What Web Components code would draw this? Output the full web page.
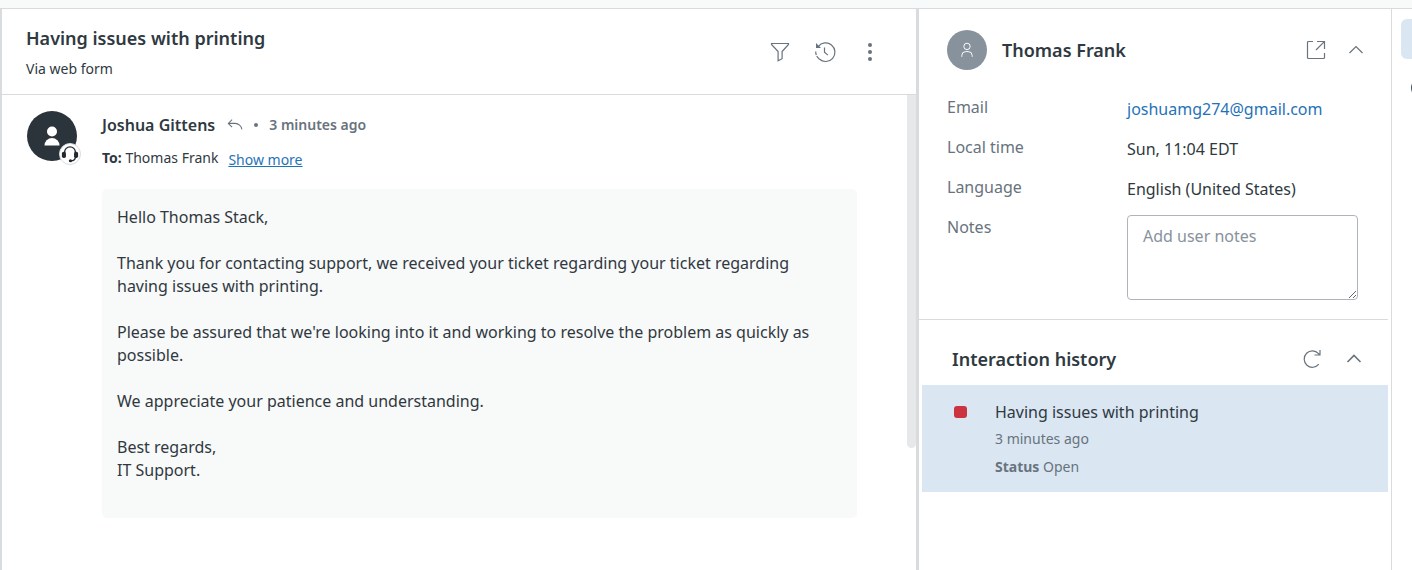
<!DOCTYPE html>
<html lang="en">
<head>
<meta charset="utf-8">
<meta name="viewport" content="width=device-width, initial-scale=1">
<title>Having issues with printing</title>
<style>
  :root {
    --ink: #2f3941;
    --muted: #68737d;
    --line: #d8dcde;
    --link: #1f73b7;
    --select: #dae6f2;
    --soft: #f8f9f9;
  }
  body {
    margin: 0;
    background: #fff;
    color: var(--ink);
    font: 16px/24px "Noto Sans", "Open Sans", sans-serif;
  }
</style>
</head>
<body>
<ticket-workspace>
  <ticket-conversation slot="main">
    <ticket-header slot="header" heading="Having issues with printing" channel="Via web form"></ticket-header>
    <ticket-message author="Joshua Gittens" when="3 minutes ago" recipient="Thomas Frank">
      <p>Hello Thomas Stack,</p>
      <p>Thank you for contacting support, we received your ticket regarding your ticket regarding having issues with printing.</p>
      <p>Please be assured that we're looking into it and working to resolve the problem as quickly as possible.</p>
      <p>We appreciate your patience and understanding.</p>
      <p>Best regards,<br>IT Support.</p>
    </ticket-message>
  </ticket-conversation>
  <customer-card slot="side" name="Thomas Frank" email="joshuamg274@gmail.com" time="Sun, 11:04 EDT" language="English (United States)"></customer-card>
  <interaction-history slot="side">
    <history-item when="3 minutes ago" status="Open">Having issues with printing</history-item>
  </interaction-history>
  <app-rail slot="rail"></app-rail>
</ticket-workspace>

<script>
const ICONS = {
  filter: '<path d="M1.500 1.500h17v1l-6.400 7v7.200l-4 2V9.500l-6.600-7z"/>',
  clock: '<path d="M3.200 4.600A9.300 9.300 0 1 1 4.300 17"/><path d="M4.300 17A9.300 9.300 0 0 1 .7 9.500" stroke-dasharray="4 1"/><path d="M1 1v5h5z" fill="currentColor" stroke="none"/><path d="M9.500 5.500v4.800l3.400 2.800"/>',
  dots: '<g fill="currentColor" stroke="none"><circle cx="10" cy="3" r="2"/><circle cx="10" cy="10" r="2"/><circle cx="10" cy="17" r="2"/></g>',
  open: '<path d="M7 1.500H2.500a1 1 0 0 0-1 1v15a1 1 0 0 0 1 1h15a1 1 0 0 0 1-1V13M11 1.500h7.500V9M18.300 1.700L10 10"/>',
  up: '<path d="M3.500 13L10 6.500l6.500 6.500"/>',
  refresh: '<path d="M16.800 15.200A8.200 8.200 0 1 1 16.500 4.600L17.800 6M18 1v5h-5.500"/>',
  reply: '<path d="M6 3L1.500 7.500 6 12M1.500 7.500h8a8 8 0 0 1 8 7"/>',
  person: '<circle cx="10" cy="5.500" r="4"/><path d="M3.500 18.500v-1.500a5 5 0 0 1 5-5h3a5 5 0 0 1 5 5v1.500"/>',
  user: '<g fill="currentColor" stroke="none"><circle cx="10" cy="5.500" r="5"/><path d="M2.500 19.500a7.500 7.500 0 0 1 15 0z"/></g>',
  headset: '<path d="M4 12V8a6 6 0 0 1 12 0V13c0 3-2 4.500-5 4.500" stroke-width="1.500"/><g fill="currentColor" stroke="none"><rect x="1" y="7.500" width="4.500" height="7" rx="2"/><rect x="14.500" y="7.500" width="4.500" height="7" rx="2"/><circle cx="10.500" cy="17.500" r="1.800"/></g>'
};

const define = (tag, render) => customElements.define(tag, class extends HTMLElement {
  connectedCallback() {
    if (this.shadowRoot) return;
    this.attachShadow({ mode: 'open' }).innerHTML =
      '<style>*{box-sizing:border-box}h1,h2,p,dl,dd,dt{margin:0}button{all:unset;box-sizing:border-box;display:grid;place-items:center;cursor:pointer}button:focus-visible{outline:2px solid #1f73b7}</style>' + render(name => this.getAttribute(name));
  }
});

define('ui-icon', at => `<style>
  :host { display: block; width: var(--size, 20px); height: var(--size, 20px); }
  svg { display: block; width: 100%; height: 100%; overflow: visible; }
</style>
<svg viewBox="0 0 20 20" fill="none" stroke="currentColor" stroke-width="${at('weight') || '1.2'}" aria-hidden="true">${ICONS[at('name')]}</svg>`);

define('ticket-workspace', () => `<style>
  :host { display: grid; grid-template-columns: minmax(0, 1fr) auto 21px; min-height: 100vh; box-sizing: border-box;
    border-top: 8px solid var(--soft); }
  main, aside, nav { border-top: 1px solid var(--line); }
  main { border-left: 2px solid var(--line); display: grid; }
  aside { width: 475px; border-left: 3px solid var(--line); }
  nav { border-left: 1px solid var(--line); overflow: hidden; }
</style>
<main><slot name="main"></slot></main>
<aside><slot name="side"></slot></aside>
<nav aria-label="Apps"><slot name="rail"></slot></nav>`);

define('ticket-conversation', () => `<style>
  :host { display: flex; flex-direction: column; }
  .log { flex: 1; display: grid; grid-template-columns: minmax(0, 1fr) 9px; }
  .thumb { background: #e6e8ea; height: 353px; border-radius: 0 0 5px 5px; }
</style>
<slot name="header"></slot>
<div class="log"><slot></slot><div class="thumb"></div></div>`);

define('ticket-header', at => `<style>
  :host { display: flex; justify-content: space-between; align-items: center; padding: 15px 36px 15px 24px; border-bottom: 1px solid var(--line); }
  h1 { font-size: 18px; line-height: 28px; font-weight: 600; }
  p { font-size: 14px; line-height: 20px; margin-top: 7px; }
  .tools { display: flex; gap: 25px; color: var(--muted); }
  button { width: 20px; height: 20px; }
</style>
<div><h1>${at('heading')}</h1><p>${at('channel')}</p></div>
<div class="tools">
  <button aria-label="Filter"><ui-icon name="filter"></ui-icon></button>
  <button aria-label="Events"><ui-icon name="clock"></ui-icon></button>
  <button aria-label="More actions"><ui-icon name="dots"></ui-icon></button>
</div>`);

define('ticket-message', at => `<style>
  :host { display: grid; grid-template-columns: 50px minmax(0, 1fr); column-gap: 25px; align-items: start; padding: 16px 50px 52px 25px; }
  .avatar { position: relative; display: grid; place-items: center; height: 50px; border-radius: 50%; background: #2b343b; color: #fff; --size: 20px; }
  .badge { position: absolute; right: -4px; bottom: -4px; width: 22px; height: 22px; border-radius: 50%; background: #fff; border: 1px solid var(--line); color: #222a30; display: grid; place-items: center; --size: 18px; }
  .by { display: flex; align-items: center; font-weight: 600; line-height: 28px; }
  .by ui-icon { margin: 0 10px 0 12px; --size: 17px; color: var(--muted); }
  .by .when { color: var(--muted); font-size: 14px; }
  .dot { width: 4px; height: 4px; border-radius: 50%; background: var(--muted); margin: 0 11px 0 0; }
  .to { display: flex; gap: 10px; font-size: 14px; line-height: 22px; margin: 8px 0 16px; }
  a { color: var(--link); line-height: 26px; }
  .bubble { background: var(--soft); border-radius: 5px; padding: 17px 15px 13px; line-height: 23px; color: #30383f; }
  ::slotted(p) { margin: 0 0 23px; }
</style>
<div class="avatar"><ui-icon name="user"></ui-icon><div class="badge"><ui-icon name="headset"></ui-icon></div></div>
<div>
  <div class="by"><span>${at('author')}</span><ui-icon name="reply"></ui-icon><i class="dot"></i><span class="when">${at('when')}</span></div>
  <div class="to"><span><b>To:</b> ${at('recipient')}</span><a href="#more">Show more</a></div>
  <div class="bubble"><slot></slot></div>
</div>`);

define('customer-card', at => `<style>
  :host { display: block; padding: 21px 30px 19px 28px; margin-right: 3px; border-bottom: 1px solid var(--line); }
  header { display: flex; align-items: center; gap: 15px; padding-bottom: 17px; margin-right: -8px; }
  .avatar { width: 40px; height: 40px; border-radius: 50%; background: #87929d; color: #fff; display: grid; place-items: center; --size: 16px; }
  h2 { flex: 1; font-size: 18px; line-height: 28px; font-weight: 600; }
  header button { width: 20px; height: 20px; color: var(--muted); margin-left: 5px; }
  dl { display: grid; grid-template-columns: 180px minmax(0, 1fr); }
  dt { color: var(--muted); line-height: 40px; height: 40px; }
  dd { line-height: 44px; height: 40px; }
  .notes { height: auto; line-height: 24px; padding-top: 8px; }
  a { color: var(--link); text-decoration: none; }
  textarea { display: block; width: 100%; height: 85px; padding: 8px 15px; font: inherit; color: inherit; border: 1px solid #aeb4b9; border-radius: 4px; background: #fff; }
  textarea::placeholder { color: #87929d; }
</style>
<header>
  <div class="avatar"><ui-icon name="person"></ui-icon></div>
  <h2>${at('name')}</h2>
  <button aria-label="Open profile"><ui-icon name="open"></ui-icon></button>
  <button aria-label="Collapse profile"><ui-icon name="up"></ui-icon></button>
</header>
<dl>
  <dt>Email</dt><dd><a href="mailto:${at('email')}">${at('email')}</a></dd>
  <dt>Local time</dt><dd>${at('time')}</dd>
  <dt>Language</dt><dd>${at('language')}</dd>
  <dt><label for="notes">Notes</label></dt><dd class="notes"><textarea id="notes" placeholder="Add user notes"></textarea></dd>
</dl>`);

define('interaction-history', () => `<style>
  :host { display: block; margin: 0 3px; }
  header { display: flex; align-items: center; gap: 22px; padding: 25px 24px 12px 30px; }
  h2 { flex: 1; font-size: 18px; line-height: 28px; font-weight: 600; }
  button { width: 20px; height: 20px; color: var(--muted); }
</style>
<header>
  <h2>Interaction history</h2>
  <button aria-label="Refresh"><ui-icon name="refresh"></ui-icon></button>
  <button aria-label="Collapse history"><ui-icon name="up" weight="1.6"></ui-icon></button>
</header>
<slot></slot>`);

define('history-item', at => `<style>
  :host { display: flex; gap: 28px; padding: 15px 32px 11px; background: var(--select); }
  .status { flex: none; width: 13px; height: 12px; margin-top: 6px; border-radius: 3px; background: #cc3340; }
  .subject { line-height: 25px; }
  .meta { font-size: 14px; line-height: 28px; color: var(--muted); }
</style>
<div class="status"></div>
<div>
  <p class="subject"><slot></slot></p>
  <p class="meta">${at('when')}</p>
  <p class="meta"><b>Status</b> ${at('status')}</p>
</div>`);

define('app-rail', () => `<style>
  :host { display: grid; gap: 9px; width: 40px; padding: 10px 9px; }
  button { width: 40px; height: 40px; border-radius: 6px; color: #49545c; }
  .active { background: var(--select); }
  .ring { width: 20px; height: 20px; border: 2px solid; border-radius: 50%; }
</style>
<button class="active" aria-label="Customer context"></button>
<button aria-label="Knowledge"><span class="ring"></span></button>`);
</script>
</body>
</html>
